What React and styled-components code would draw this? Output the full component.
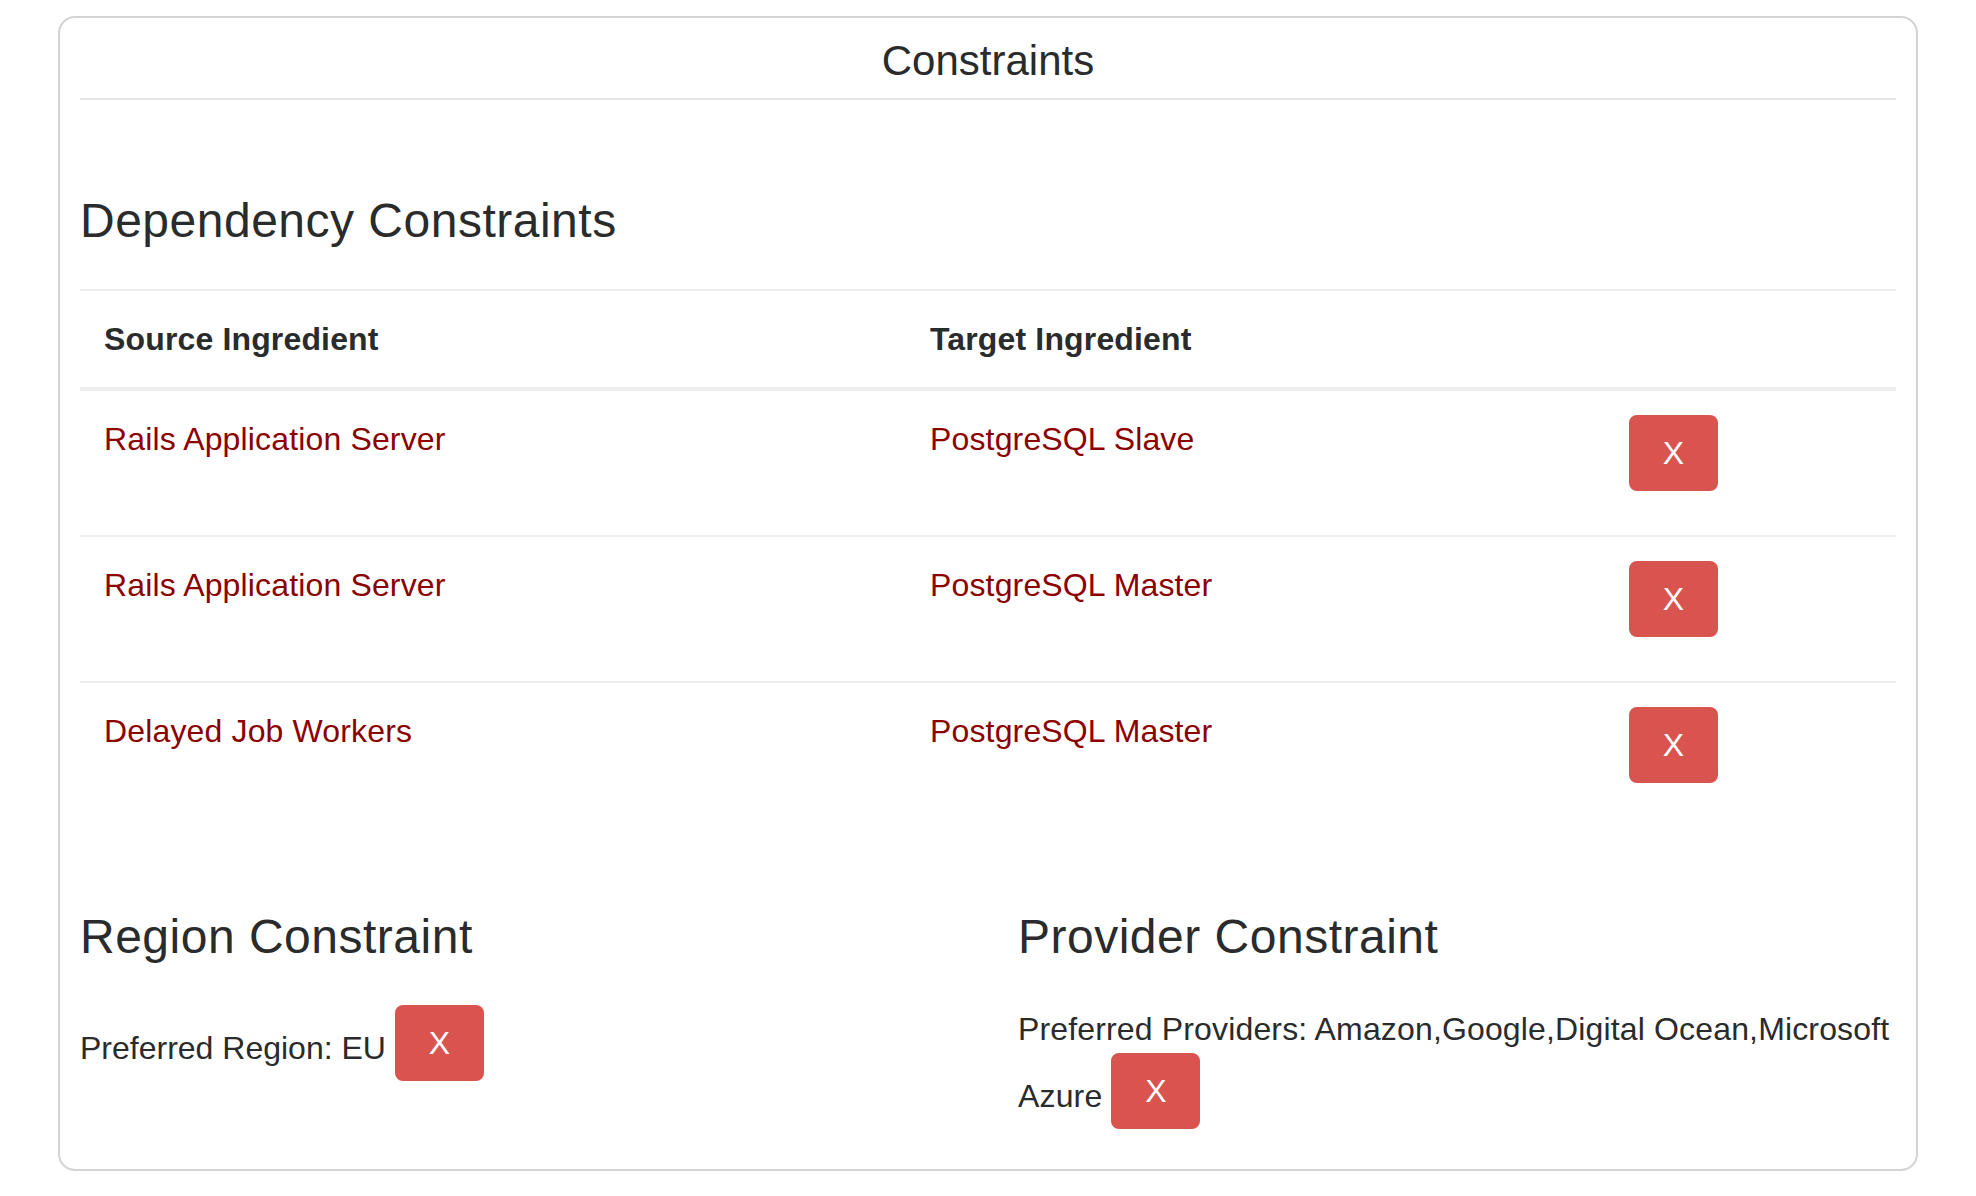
import React from "react";
import styled, { createGlobalStyle } from "styled-components";

const GlobalStyle = createGlobalStyle`
  html, body {
    margin: 0;
    padding: 0;
    background: #fff;
  }
  body {
    font-family: "Liberation Sans", Arial, Helvetica, sans-serif;
    color: #292b2c;
  }
`;

const Page = styled.div`
  padding: 16px 58px 26px;
`;

const Card = styled.div`
  box-sizing: border-box;
  width: 1860px;
  border: 2px solid #d4d4d4;
  border-radius: 17px;
  padding: 0 20px 40px;
`;

const CardHeader = styled.div`
  padding: 18px 0 12px;
  border-bottom: 2px solid #e6e6e6;
  text-align: center;
  font-size: 42px;
  line-height: 1.2;
`;

const SectionTitle = styled.h3`
  margin: ${(props) => props.$top || 0}px 0 39px;
  font-size: 48px;
  font-weight: 400;
  line-height: 1.2;
  letter-spacing: 0.5px;
`;

const Table = styled.table`
  width: 100%;
  border-collapse: separate;
  border-spacing: 0;
  table-layout: fixed;
  font-size: 32px;
  line-height: 1.5;
  letter-spacing: 0.15px;
`;

const Col = styled.col`
  width: ${(props) => props.$w};
`;

const Th = styled.th`
  text-align: left;
  font-weight: 700;
  padding: 24px;
  border-top: 2px solid #eceeef;
  border-bottom: 4px solid #eceeef;
  vertical-align: bottom;
`;

const Td = styled.td`
  padding: 24px;
  vertical-align: top;
  border-top: 2px solid #eceeef;

  tr:first-child > & {
    border-top: none;
  }
`;

const Ingredient = styled.a`
  color: #8b0000;
  text-decoration: none;
  cursor: pointer;
`;

const DeleteButton = styled.button`
  display: ${(props) => (props.$block ? "block" : "inline-block")};
  box-sizing: border-box;
  width: 89px;
  height: 76px;
  padding: 12px 0;
  margin: ${(props) => (props.$block ? "0 0 20px" : "0")};
  vertical-align: 5px;
  font-family: inherit;
  font-size: 32px;
  line-height: 48px;
  letter-spacing: 0;
  color: #fff;
  background: #d9534f;
  border: 2px solid #d9534f;
  border-radius: 8px;
  text-align: center;
  cursor: pointer;
`;

const Split = styled.div`
  display: grid;
  grid-template-columns: 1fr 1fr;
  column-gap: 60px;
  margin-top: 81px;
`;

const Line = styled.p`
  margin: 0;
  font-size: 32px;
  line-height: 48px;
  letter-spacing: ${(props) => props.$spacing || 0}px;
`;

const dependencies = [
  { source: "Rails Application Server", target: "PostgreSQL Slave" },
  { source: "Rails Application Server", target: "PostgreSQL Master" },
  { source: "Delayed Job Workers", target: "PostgreSQL Master" },
];

export default function App() {
  return (
    <>
      <GlobalStyle />
      <Page>
        <Card>
          <CardHeader>Constraints</CardHeader>

          <SectionTitle $top={92}>Dependency Constraints</SectionTitle>
          <Table>
            <colgroup>
              <Col $w="826px" />
              <Col $w="699px" />
              <Col $w="291px" />
            </colgroup>
            <thead>
              <tr>
                <Th>Source Ingredient</Th>
                <Th>Target Ingredient</Th>
                <Th></Th>
              </tr>
            </thead>
            <tbody>
              {dependencies.map((d, i) => (
                <tr key={i}>
                  <Td>
                    <Ingredient>{d.source}</Ingredient>
                  </Td>
                  <Td>
                    <Ingredient>{d.target}</Ingredient>
                  </Td>
                  <Td>
                    <DeleteButton type="button" $block>
                      X
                    </DeleteButton>
                  </Td>
                </tr>
              ))}
            </tbody>
          </Table>

          <Split>
            <div>
              <SectionTitle>Region Constraint</SectionTitle>
              <Line>
                Preferred Region: EU <DeleteButton type="button">X</DeleteButton>
              </Line>
            </div>
            <div>
              <SectionTitle>Provider Constraint</SectionTitle>
              <Line $spacing={0.15}>
                Preferred Providers: Amazon,Google,Digital Ocean,Microsoft Azure{" "}
                <DeleteButton type="button">X</DeleteButton>
              </Line>
            </div>
          </Split>
        </Card>
      </Page>
    </>
  );
}
